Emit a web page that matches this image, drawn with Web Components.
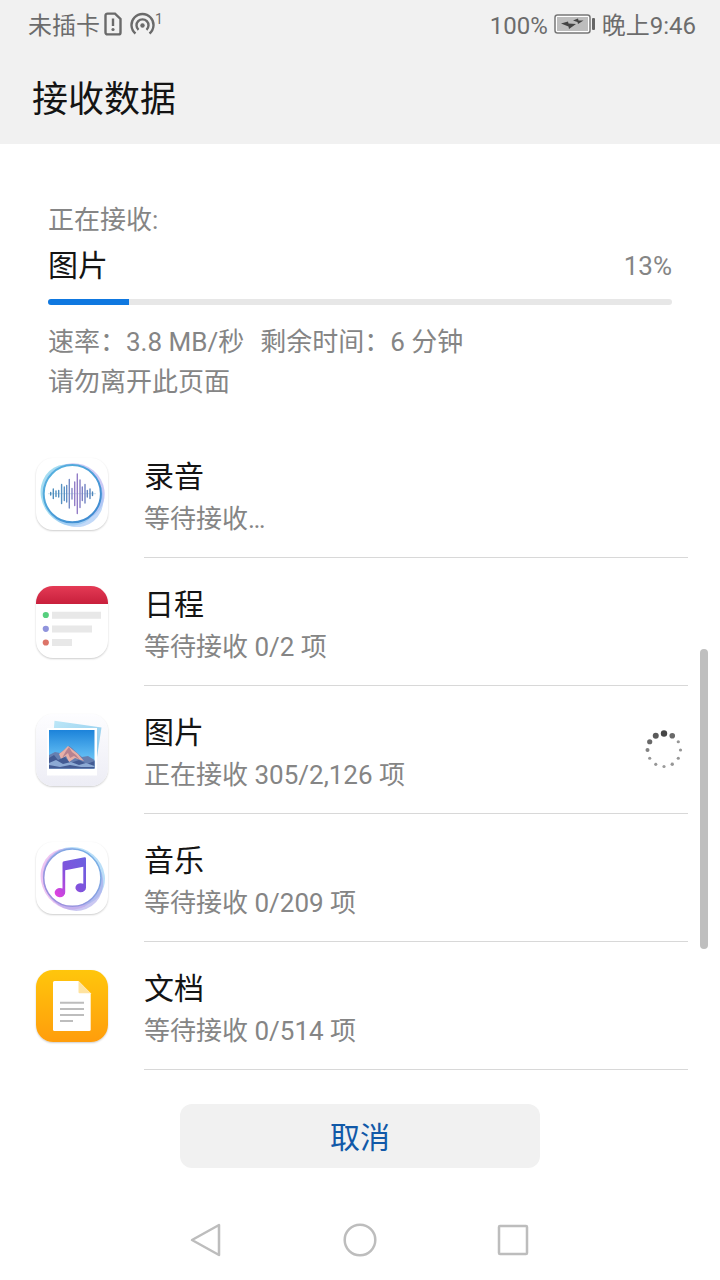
<!DOCTYPE html>
<html lang="zh-CN">
<head>
<meta charset="utf-8">
<meta name="viewport" content="width=device-width, initial-scale=1">
<title>接收数据</title>
<style>
  html, body { height: 100%; }
  body {
    margin: 0;
    background: #fff;
    color: #141414;
    font-family: Roboto, "Noto Sans CJK SC", sans-serif;
    font-size: 26px;
    line-height: 40px;
  }
</style>
</head>
<body>
<phone-screen></phone-screen>

<template id="phone-screen">
  <style>
    :host { display: flex; flex-direction: column; min-height: 100vh; position: relative; }
    header { background: #f1f1f1; }
    h1 { margin: 0; padding: 28px 32px 20px; font-size: 36px; line-height: 48px; font-weight: 400; }
    main { flex: 1; }
    .actions { display: flex; justify-content: center; padding: 34px 0 32px; }
  </style>
  <header>
    <status-bar></status-bar>
    <h1>接收数据</h1>
  </header>
  <main>
    <transfer-progress value="13">
      <span slot="label">正在接收:</span>
      <span slot="name">图片</span>
      <span slot="rate">速率：3.8 MB/秒</span>
      <span slot="time">剩余时间：6 分钟</span>
      <span slot="hint">请勿离开此页面</span>
    </transfer-progress>
    <div role="list">
      <transfer-item role="listitem" icon="recorder">录音<span slot="status">等待接收…</span></transfer-item>
      <transfer-item role="listitem" icon="calendar">日程<span slot="status">等待接收 0/2 项</span></transfer-item>
      <transfer-item role="listitem" icon="gallery">图片<span slot="status">正在接收 305/2,126 项</span><busy-spinner slot="end"></busy-spinner></transfer-item>
      <transfer-item role="listitem" icon="music">音乐<span slot="status">等待接收 0/209 项</span></transfer-item>
      <transfer-item role="listitem" icon="document">文档<span slot="status">等待接收 0/514 项</span></transfer-item>
    </div>
    <div class="actions"><action-button>取消</action-button></div>
  </main>
  <nav-bar></nav-bar>
  <scroll-thumb></scroll-thumb>
</template>

<template id="status-bar">
  <style>
    :host { display: flex; justify-content: space-between; align-items: center; height: 48px; padding: 0 24px 0 28px; font-size: 24px; line-height: 32px; color: #6c6c6c; }
    div { display: flex; align-items: center; }
    span { padding-top: 3px; }
    .left { gap: 4px; }
    .right { gap: 6px; }
    svg { display: block; }
    .hotspot { display: flex; align-items: flex-start; padding-left: 4px; }
    sup { font-size: 14px; line-height: 14px; }
  </style>
  <div class="left">
    <span>未插卡</span>
    <svg width="18" height="24" viewBox="0 0 18 24" fill="none" stroke="#6a6a6a" stroke-width="2.4"><path d="M3.5 1.6H11L16.5 7V20.4A2 2 0 0 1 14.5 22.4H3.5A2 2 0 0 1 1.5 20.4V3.6A2 2 0 0 1 3.5 1.6Z"/><path d="M9 6.5V14"/><circle cx="9" cy="17.5" r="1.6" fill="#6a6a6a" stroke="none"/></svg>
    <div class="hotspot">
      <svg width="25" height="24" viewBox="0 0 25 24" fill="none" stroke="#6a6a6a" stroke-width="2.4"><path d="M5.5 21.500A11 11 0 1 1 19.500 21.500"/><path d="M8.500 17.800A6 6 0 1 1 16.500 17.800"/><circle cx="12.500" cy="13.500" r="2.200" fill="#6a6a6a" stroke="none"/></svg>
      <sup>1</sup>
    </div>
  </div>
  <div class="right">
    <span>100%</span>
    <svg width="42" height="22" viewBox="0 0 42 22"><rect x="1" y="2" width="35" height="18" rx="2.5" fill="#fff" stroke="#777" stroke-width="1.5"/><rect x="3" y="4" width="31" height="14" fill="#bdbdbd"/><rect x="38" y="5" width="3" height="12" rx="1" fill="#666"/><path d="M7 10.500 14 8.500 14.500 10.500 22 11 15 16 14.500 13.500ZM19 7.500 24 5.500 24.500 7.500 29.500 7.500 24 11 23.500 9Z" fill="#444"/></svg>
    <span>晚上9:46</span>
  </div>
</template>

<template id="transfer-progress">
  <style>
    :host { display: block; padding: 56px 48px 28px; color: #858585; }
    .row { display: flex; justify-content: space-between; align-items: center; height: 52px; }
    .name { font-size: 30px; color: #141414; }
    .details { display: flex; flex-wrap: wrap; gap: 0 16px; }
    progress { appearance: none; display: block; width: 100%; height: 6px; margin: 7px 0 17px; border: 0; border-radius: 3px; overflow: hidden; background: #e7e7e7; }
    progress::-webkit-progress-bar { background: #e7e7e7; }
    progress::-webkit-progress-value { background: #0f78e0; }
    progress::-moz-progress-bar { background: #0f78e0; }
  </style>
  <div><slot name="label"></slot></div>
  <div class="row"><label class="name" for="bar"><slot name="name"></slot></label><span class="percent"></span></div>
  <progress id="bar" max="100"></progress>
  <div class="details"><slot name="rate"></slot><slot name="time"></slot></div>
  <div><slot name="hint"></slot></div>
</template>

<template id="transfer-item">
  <style>
    :host { display: flex; align-items: center; gap: 36px; height: 128px; padding: 0 32px 0 36px; }
    .body { flex: 1; display: flex; align-items: center; box-sizing: border-box; height: 100%; border-bottom: 1px solid #d8d8d8; }
    .text { flex: 1; padding-top: 8px; line-height: 42px; }
    .name { font-size: 30px; }
    .status { color: #858585; }
  </style>
  <app-icon></app-icon>
  <div class="body">
    <div class="text">
      <div class="name"><slot></slot></div>
      <div class="status"><slot name="status"></slot></div>
    </div>
    <slot name="end"></slot>
  </div>
</template>

<template id="app-icon">
  <style>
    :host { display: block; flex: none; width: 72px; height: 72px; border-radius: 17px; overflow: hidden; background: #fff; box-shadow: 0 1px 2px #0003; }
    svg { display: block; }
  </style>
</template>

<template id="icon-recorder">
  <svg width="72" height="72" viewBox="0 0 72 72">
    <defs>
      <linearGradient id="ring" x1="0" y1="0" x2="1" y2="1"><stop offset="0" stop-color="#58b6e0"/><stop offset="1" stop-color="#3d86cf"/></linearGradient>
      <linearGradient id="wave" x1="14" y1="0" x2="57" y2="0" gradientUnits="userSpaceOnUse"><stop offset="0" stop-color="#4a8cba"/><stop offset=".35" stop-color="#5a93c4"/><stop offset=".6" stop-color="#9a7cc8"/><stop offset="1" stop-color="#4a86bb"/></linearGradient>
    </defs>
    <ellipse cx="33.500" cy="37" rx="31.500" ry="28" fill="#75cdea" opacity=".65" transform="rotate(60 33.500 37)"/>
    <ellipse cx="39.500" cy="34" rx="30" ry="28" fill="#b2adf0" opacity=".65" transform="rotate(40 39.500 34)"/>
    <ellipse cx="37" cy="38" rx="32.500" ry="29" fill="#a2c5f5" opacity=".65" transform="rotate(50 37 38)"/>
    <circle cx="36.300" cy="35.700" r="28.600" fill="#fff" stroke="url(#ring)" stroke-width="2"/>
    <path d="M12 35.700H60" stroke="#b6d3e6" stroke-width=".7"/>
    <path stroke="url(#wave)" stroke-width="1.400" stroke-linecap="round" d="M14.700 34.500v2.500M17.300 31v9.500M20 33v5.500M22.700 32.500v6.500M25.600 26.500v19M28.300 29v13.500M30.700 27.500v16.500M33.300 21.500v28.500M36 30.500v10.500M38.700 24v23.500M41.300 16v39.500M44 22v27.500M46.300 29v13.500M49 26.500v18.500M51.300 32.500v6.500M54 31v9.500M56.500 34v3.500"/>
  </svg>
</template>

<template id="icon-calendar">
  <svg width="72" height="72" viewBox="0 0 72 72">
    <defs><linearGradient id="red" x1="0" y1="0" x2="0" y2="1"><stop offset="0" stop-color="#e43a55"/><stop offset="1" stop-color="#c81f3c"/></linearGradient></defs>
    <rect width="72" height="18" fill="url(#red)"/>
    <path fill="#e8e8e8" d="M16 25.700h49v7H16zM16 39.400h40v7H16zM16 53h20v7H16z"/>
    <circle cx="9.800" cy="29" r="3.100" fill="#56cf7e"/><circle cx="9.800" cy="42.800" r="3.100" fill="#9094dc"/><circle cx="9.800" cy="56.500" r="3.100" fill="#dc7468"/>
  </svg>
</template>

<template id="icon-gallery">
  <svg width="72" height="72" viewBox="0 0 72 72">
    <defs>
      <linearGradient id="card" x1="0" y1="0" x2="0" y2="1"><stop offset="0" stop-color="#fdfdff"/><stop offset="1" stop-color="#ededf5"/></linearGradient>
      <linearGradient id="sky" x1="0" y1="0" x2="0" y2="1"><stop offset="0" stop-color="#1c83da"/><stop offset=".7" stop-color="#62bdf3"/></linearGradient>
      <linearGradient id="back" x1="0" y1="0" x2="1" y2="1"><stop offset="0" stop-color="#bee8f8"/><stop offset="1" stop-color="#85c4ea"/></linearGradient>
    </defs>
    <rect width="72" height="72" fill="url(#card)"/>
    <path d="M18.500 6.700 65.500 13.500 59.500 53 15 50Z" fill="url(#back)"/>
    <rect x="11" y="14" width="50" height="47.500" fill="#fff"/>
    <rect x="13" y="16" width="45.500" height="38.500" fill="url(#sky)"/>
    <path d="M13 41 19 38 24 39 33 32 36 34 40 38 46 43 52 42 58.500 46V54.500H13Z" fill="#667fb0"/>
    <path d="M23 40 28 36 32 32 34 33.500 37 36 42 40 48 47 39 44 33 48 30 42 25 45Z" fill="#e6afa7"/>
    <path d="M30 37 33 33 36 38 40 41 44 46 38 42 34 44 32 39 26 44Z" fill="#b88290"/>
    <path d="M13 44 18 41 22 46 29 43 34 49 43 46 51 50 58.500 47V54.500H13Z" fill="#435b93"/>
    <path d="M13 49 20 46 27 50 35 48 43 51 50 49 58.500 52V53L45 53 34 51 24 53 13 51Z" fill="#8caad4"/>
  </svg>
</template>

<template id="icon-music">
  <svg width="72" height="72" viewBox="0 0 72 72">
    <defs>
      <linearGradient id="ring" x1="1" y1="0" x2="0" y2="1"><stop offset="0" stop-color="#72b5e6"/><stop offset="1" stop-color="#a488dc"/></linearGradient>
      <linearGradient id="note" x1="1" y1="0" x2="0" y2="1"><stop offset="0" stop-color="#6a62e0"/><stop offset=".5" stop-color="#8053dc"/><stop offset="1" stop-color="#ea3fe0"/></linearGradient>
    </defs>
    <ellipse cx="33.500" cy="37" rx="31.500" ry="28" fill="#eab6ef" opacity=".8" transform="rotate(60 33.500 37)"/>
    <ellipse cx="39" cy="34.500" rx="31" ry="28.500" fill="#a4d4f5" opacity=".75" transform="rotate(40 39 34.500)"/>
    <ellipse cx="37" cy="37.500" rx="32.500" ry="29" fill="#a9a3ea" opacity=".6" transform="rotate(55 37 37.500)"/>
    <circle cx="36.300" cy="35.700" r="28.600" fill="#fff" stroke="url(#ring)" stroke-width="1.500"/>
    <path fill="url(#note)" d="M28 19.300 48.500 15.200Q50 15 50 16.500V45.500A5.300 4.500 0 1 1 47.300 41.800V24.800L29.200 28.300V50.300A5.300 4.700 0 1 1 26.500 46.500V21Q26.500 19.600 28 19.300Z"/>
  </svg>
</template>

<template id="icon-document">
  <svg width="72" height="72" viewBox="0 0 72 72">
    <defs><linearGradient id="amber" x1="0" y1="0" x2="0" y2="1"><stop offset="0" stop-color="#ffc60c"/><stop offset="1" stop-color="#ff9d0c"/></linearGradient></defs>
    <rect width="72" height="72" fill="url(#amber)"/>
    <path d="M18.500 11H42.500L54.700 23.300V59.500Q54.700 61 53.200 61H18.500Q17 61 17 59.500V12.500Q17 11 18.500 11Z" fill="#fff"/>
    <path d="M42.500 11 54.700 23.300H43.500Q42.500 23.300 42.500 22.300Z" fill="#ffe3a0"/>
    <path d="M24 32.700H48M24 38.900H48M24 44.900H48M24 51H37" stroke="#bdbdbd" stroke-width="2"/>
  </svg>
</template>

<template id="busy-spinner">
  <style>:host { display: block; width: 48px; height: 48px; } svg { display: block; }</style>
  <svg width="48" height="48" viewBox="0 0 48 48" role="img" aria-label="正在接收">
    <g id="dots"></g>
  </svg>
</template>

<template id="action-button">
  <style>
    :host { display: block; width: 50%; }
    button { display: block; width: 100%; height: 64px; border: 0; border-radius: 12px; background: #f1f1f1; color: #1159a8; font: inherit; font-size: 30px; line-height: 40px; padding: 4px 0 0; }
  </style>
  <button type="button"><slot></slot></button>
</template>

<template id="nav-bar">
  <style>
    :host { display: block; }
    nav { display: grid; grid-template-columns: repeat(3, 1fr); padding: 0 18%; height: 80px; }
    button { display: grid; place-items: center; border: 0; padding: 0; background: none; }
    svg { display: block; fill: none; stroke: #bdbdbd; stroke-linejoin: round; }
  </style>
  <nav aria-label="系统导航">
    <button type="button" aria-label="返回"><svg width="36" height="36" viewBox="0 0 36 36" stroke-width="2.5"><path d="M4 18 31 3V33Z"/></svg></button>
    <button type="button" aria-label="主屏幕"><svg width="36" height="36" viewBox="0 0 36 36" stroke-width="2.5"><circle cx="18" cy="18" r="15.3"/></svg></button>
    <button type="button" aria-label="最近任务"><svg width="36" height="36" viewBox="0 0 36 36" stroke-width="2.5"><rect x="3" y="4" width="28" height="28" rx="1"/></svg></button>
  </nav>
</template>

<template id="scroll-thumb">
  <style>:host { position: absolute; right: 12px; top: 649px; width: 8px; height: 300px; border-radius: 4px; background: #bfbfbf; }</style>
</template>

<script>
  class TemplateElement extends HTMLElement {
    constructor() {
      super();
      this.attachShadow({ mode: "open" }).append(
        document.getElementById(this.localName).content.cloneNode(true));
    }
  }

  class AppIcon extends TemplateElement {
    static observedAttributes = ["name"];
    attributeChangedCallback(attr, old, name) {
      this.shadowRoot.querySelector("svg")?.remove();
      this.shadowRoot.append(document.getElementById("icon-" + name).content.cloneNode(true));
    }
  }

  class TransferItem extends TemplateElement {
    connectedCallback() {
      this.shadowRoot.querySelector("app-icon").setAttribute("name", this.getAttribute("icon"));
    }
  }

  class TransferProgress extends TemplateElement {
    connectedCallback() {
      const value = this.getAttribute("value");
      this.shadowRoot.querySelector("progress").value = value;
      this.shadowRoot.querySelector(".percent").textContent = value + "%";
    }
  }

  class BusySpinner extends TemplateElement {
    connectedCallback() {
      // Twelve dots clockwise from the top: radius and grey level.
      const dots = [[3.2, 70], [2.8, 105], [1.6, 150], [1.6, 150], [1.6, 150], [1.7, 150],
                    [1.6, 155], [1.6, 150], [1.6, 150], [2, 130], [2.6, 105], [3, 90]];
      this.shadowRoot.getElementById("dots").innerHTML = dots.map(([r, g], i) => {
        const a = i * Math.PI / 6;
        return `<circle cx="${24 + 16.5 * Math.sin(a)}" cy="${24 - 16.5 * Math.cos(a)}" r="${r}" fill="rgb(${g},${g},${g})"/>`;
      }).join("");
    }
  }

  customElements.define("app-icon", AppIcon);
  customElements.define("busy-spinner", BusySpinner);
  customElements.define("transfer-item", TransferItem);
  customElements.define("transfer-progress", TransferProgress);
  for (const name of ["status-bar", "action-button", "nav-bar", "scroll-thumb", "phone-screen"]) {
    customElements.define(name, class extends TemplateElement {});
  }
</script>
</body>
</html>
